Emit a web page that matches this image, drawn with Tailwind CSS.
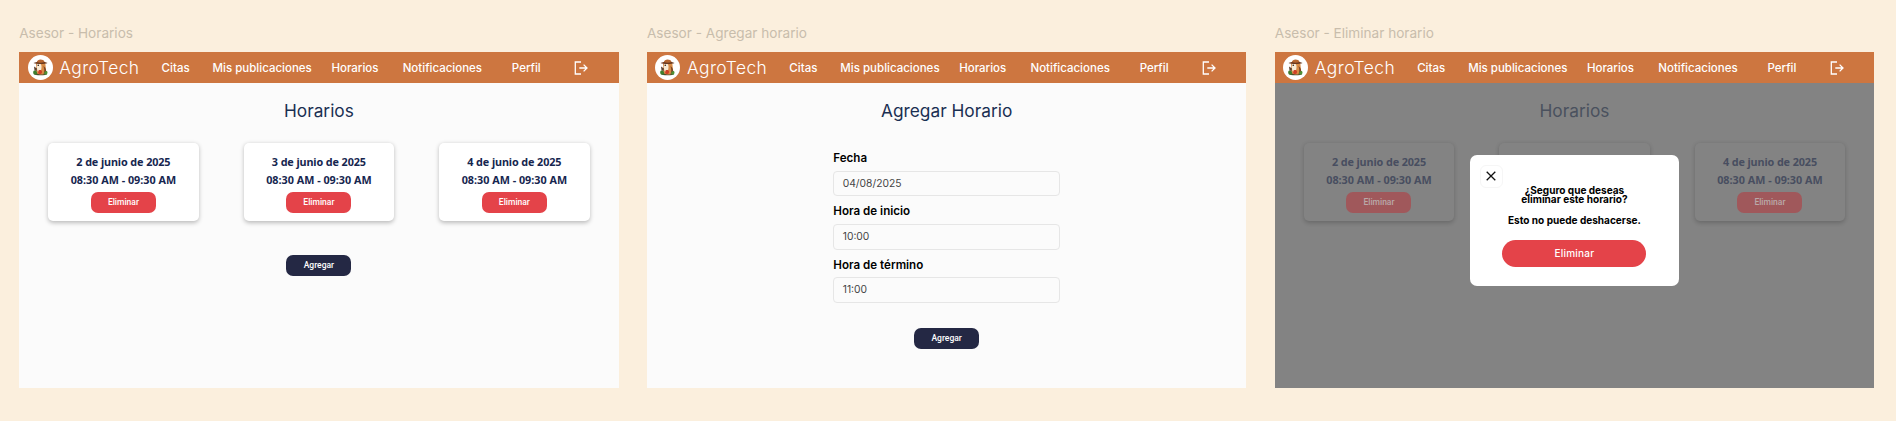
<!DOCTYPE html>
<html lang="es">
<head>
<meta charset="utf-8">
<title>AgroTech - Horarios</title>
<script src="https://cdn.jsdelivr.net/npm/@tailwindcss/browser@4"></script>
</head>
<body class="h-[421px] overflow-hidden bg-[#fbefdd] font-['Inter',sans-serif]">

<svg class="hidden">
  <symbol id="logo" viewBox="0 0 50 50">
    <circle cx="25" cy="25" r="25" fill="#fff"/>
    <ellipse cx="25" cy="38" rx="13" ry="2.5" fill="#4c4a2c"/>
    <path d="M16 19c0-5 4-8 9-8s10 3 10 9c0 5 2 9 1 14-1 4-5 5-10 5s-10-2-10-7c0-5 1-8 0-13z" fill="#d98b45"/>
    <path d="M18 17c5-3 9 1 9 6 0 6-1 10-5 12-4-2-5-9-4-18z" fill="#f7ead5"/>
    <path d="M11 16c6-3 22-4 28 0-5 2.500-22 2.500-28 0z" fill="#6b3a20"/>
    <path d="M18 14c0-6 13-7 15 0-4 2-11 2-15 0z" fill="#b5652f"/>
    <circle cx="20.500" cy="20.500" r="1.6" fill="#2a1a12"/>
    <path d="M12 23l6 4-1 5-4-1z" fill="#5b4130"/>
    <path d="M31 22c5 3 6 9 5 15l-5 1c2-5 2-9 0-16z" fill="#7a4526"/>
    <path d="M11 32c3-2 7 0 7 3v4h-6c-2-2-2-5-1-7z" fill="#3f7d2d"/>
    <path d="M34 33c3-2 5-1 5 2l-1 4h-5c-1-3-1-4 1-6z" fill="#4f8f33"/>
    <path d="M21 31c3-2 7-1 7 3s-3 4-5 4-4-3-2-7z" fill="#cf3f26"/>
  </symbol>
  <symbol id="exit" viewBox="0 0 14 14">
    <path d="M7 1H1.300v12H7M5.300 7h7.200M9.600 3.600 13 7 9.600 10.400" fill="none" stroke="#fff" stroke-width="1.3"/>
  </symbol>
</svg>

<main class="flex gap-[28.4px] pt-[23px] pl-[19.2px]">

  <section class="w-[599.4px] shrink-0">
    <h2 class="h-5 text-[13.6px] leading-[21px] whitespace-nowrap text-[#c8bdac]">Asesor - Horarios</h2>
    <div class="mt-[8.5px] h-[336.8px] bg-[#fbfbfb]">
      <nav class="flex h-[31.6px] items-center bg-[#cd7640] pt-px pl-[8.4px] text-[11.5px] leading-5 font-medium whitespace-nowrap text-white">
        <div class="flex w-[134px] items-center">
          <svg class="size-[25px]"><use href="#logo"/></svg>
          <span class="ml-[6.6px] text-[17.4px] font-light tracking-[0.45px]">AgroTech</span>
        </div>
        <a class="w-[51px]">Citas</a>
        <a class="w-[118.8px]">Mis publicaciones</a>
        <a class="w-[71.3px]">Horarios</a>
        <a class="w-[109.2px]">Notificaciones</a>
        <a class="w-[62.3px]">Perfil</a>
        <svg class="size-3.5"><use href="#exit"/></svg>
      </nav>
      <div class="flex flex-col items-center pt-[17.6px]">
        <h1 class="text-[17.3px] leading-5 text-[#1a2f52]">Horarios</h1>
        <div class="mt-[22px] flex gap-[45.2px] text-center font-['Noto_Sans',sans-serif] text-[10.8px] leading-[18px] font-bold text-[#16264f]">
          <article class="flex h-[78.3px] w-[150.3px] flex-col items-center rounded-[5px] bg-white pt-[10px] shadow-[0_1.5px_4px_rgba(0,0,0,0.25)]">
            <p class="tracking-[-0.1px]">2 de junio de 2025</p>
            <p>08:30 AM - 09:30 AM</p>
            <button class="mt-[3.4px] h-[20.5px] w-[65px] rounded-[7px] bg-[#e44349] font-['Roboto',sans-serif] text-[8.5px] leading-[20.5px] font-medium text-white">Eliminar</button>
          </article>
          <article class="flex h-[78.3px] w-[150.3px] flex-col items-center rounded-[5px] bg-white pt-[10px] shadow-[0_1.5px_4px_rgba(0,0,0,0.25)]">
            <p class="tracking-[-0.1px]">3 de junio de 2025</p>
            <p>08:30 AM - 09:30 AM</p>
            <button class="mt-[3.4px] h-[20.5px] w-[65px] rounded-[7px] bg-[#e44349] font-['Roboto',sans-serif] text-[8.5px] leading-[20.5px] font-medium text-white">Eliminar</button>
          </article>
          <article class="flex h-[78.3px] w-[150.3px] flex-col items-center rounded-[5px] bg-white pt-[10px] shadow-[0_1.5px_4px_rgba(0,0,0,0.25)]">
            <p class="tracking-[-0.1px]">4 de junio de 2025</p>
            <p>08:30 AM - 09:30 AM</p>
            <button class="mt-[3.4px] h-[20.5px] w-[65px] rounded-[7px] bg-[#e44349] font-['Roboto',sans-serif] text-[8.5px] leading-[20.5px] font-medium text-white">Eliminar</button>
          </article>
        </div>
        <button class="mt-[34.2px] h-[20.5px] w-[65px] rounded-[7px] bg-[#242844] font-['Roboto',sans-serif] text-[8.5px] leading-[20.5px] font-medium text-white">Agregar</button>
      </div>
    </div>
  </section>

  <section class="w-[599.4px] shrink-0">
    <h2 class="h-5 text-[13.6px] leading-[21px] whitespace-nowrap text-[#c8bdac]">Asesor - Agregar horario</h2>
    <div class="mt-[8.5px] h-[336.8px] bg-[#fbfbfb]">
      <nav class="flex h-[31.6px] items-center bg-[#cd7640] pt-px pl-[8.4px] text-[11.5px] leading-5 font-medium whitespace-nowrap text-white">
        <div class="flex w-[134px] items-center">
          <svg class="size-[25px]"><use href="#logo"/></svg>
          <span class="ml-[6.6px] text-[17.4px] font-light tracking-[0.45px]">AgroTech</span>
        </div>
        <a class="w-[51px]">Citas</a>
        <a class="w-[118.8px]">Mis publicaciones</a>
        <a class="w-[71.3px]">Horarios</a>
        <a class="w-[109.2px]">Notificaciones</a>
        <a class="w-[62.3px]">Perfil</a>
        <svg class="size-3.5"><use href="#exit"/></svg>
      </nav>
      <div class="flex flex-col items-center pt-[17.6px]">
        <h1 class="text-[17.3px] leading-5 text-[#1a2f52]">Agregar Horario</h1>
        <form class="mt-[27.7px] flex w-[226.7px] flex-col gap-[5px] text-[11.6px] leading-5 font-semibold text-black">
          <label>Fecha
            <span class="mt-[2.5px] flex h-[25.6px] items-center rounded-[4px] border border-[#e6e6e6] pb-[2px] pl-[8.4px] text-[10.3px] font-normal text-[#454545]">04/08/2025</span>
          </label>
          <label>Hora de inicio
            <span class="mt-[2.5px] flex h-[25.6px] items-center rounded-[4px] border border-[#e6e6e6] pb-[2px] pl-[8.4px] text-[10.3px] font-normal text-[#454545]">10:00</span>
          </label>
          <label>Hora de término
            <span class="mt-[2.5px] flex h-[25.6px] items-center rounded-[4px] border border-[#e6e6e6] pb-[2px] pl-[8.4px] text-[10.3px] font-normal text-[#454545]">11:00</span>
          </label>
        </form>
        <button class="mt-[25.4px] h-[20.5px] w-[65px] rounded-[7px] bg-[#242844] font-['Roboto',sans-serif] text-[8.5px] leading-[20.5px] font-medium text-white">Agregar</button>
      </div>
    </div>
  </section>

  <section class="w-[599.4px] shrink-0">
    <h2 class="h-5 text-[13.6px] leading-[21px] whitespace-nowrap text-[#c8bdac]">Asesor - Eliminar horario</h2>
    <div class="relative mt-[8.5px] h-[336.8px] bg-[#838383]">
      <nav class="flex h-[31.6px] items-center bg-[#cd7640] pt-px pl-[8.4px] text-[11.5px] leading-5 font-medium whitespace-nowrap text-white">
        <div class="flex w-[134px] items-center">
          <svg class="size-[25px]"><use href="#logo"/></svg>
          <span class="ml-[6.6px] text-[17.4px] font-light tracking-[0.45px]">AgroTech</span>
        </div>
        <a class="w-[51px]">Citas</a>
        <a class="w-[118.8px]">Mis publicaciones</a>
        <a class="w-[71.3px]">Horarios</a>
        <a class="w-[109.2px]">Notificaciones</a>
        <a class="w-[62.3px]">Perfil</a>
        <svg class="size-3.5"><use href="#exit"/></svg>
      </nav>
      <div class="flex flex-col items-center pt-[17.6px]">
        <h1 class="text-[17.3px] leading-5 text-[#4a515e]">Horarios</h1>
        <div class="mt-[22px] flex gap-[45.2px] text-center font-['Noto_Sans',sans-serif] text-[10.8px] leading-[18px] font-bold text-[#484e60]">
          <article class="flex h-[78.3px] w-[150.3px] flex-col items-center rounded-[5px] bg-[#838383] pt-[10px] shadow-[0_1.5px_4px_rgba(0,0,0,0.2)]">
            <p class="tracking-[-0.1px]">2 de junio de 2025</p>
            <p>08:30 AM - 09:30 AM</p>
            <button class="mt-[3.4px] h-[20.5px] w-[65px] rounded-[7px] bg-[#a0585b] font-['Roboto',sans-serif] text-[8.5px] leading-[20.5px] font-medium text-[#b9a9a9]">Eliminar</button>
          </article>
          <article class="flex h-[78.3px] w-[150.3px] flex-col items-center rounded-[5px] bg-[#838383] pt-[10px] shadow-[0_1.5px_4px_rgba(0,0,0,0.2)]">
            <p class="tracking-[-0.1px]">3 de junio de 2025</p>
            <p>08:30 AM - 09:30 AM</p>
            <button class="mt-[3.4px] h-[20.5px] w-[65px] rounded-[7px] bg-[#a0585b] font-['Roboto',sans-serif] text-[8.5px] leading-[20.5px] font-medium text-[#b9a9a9]">Eliminar</button>
          </article>
          <article class="flex h-[78.3px] w-[150.3px] flex-col items-center rounded-[5px] bg-[#838383] pt-[10px] shadow-[0_1.5px_4px_rgba(0,0,0,0.2)]">
            <p class="tracking-[-0.1px]">4 de junio de 2025</p>
            <p>08:30 AM - 09:30 AM</p>
            <button class="mt-[3.4px] h-[20.5px] w-[65px] rounded-[7px] bg-[#a0585b] font-['Roboto',sans-serif] text-[8.5px] leading-[20.5px] font-medium text-[#b9a9a9]">Eliminar</button>
          </article>
        </div>
      </div>
      <div role="dialog" class="absolute top-[103.5px] left-[195.4px] flex h-[130.6px] w-[208.6px] flex-col items-center rounded-[7px] bg-white pt-[31px] text-center text-[10.05px] leading-[9px] font-bold whitespace-nowrap text-black">
        <button class="absolute top-[10px] left-[10px] flex size-[22.6px] items-center justify-center rounded-[6px] border border-[#f6f6f6]">
          <svg viewBox="0 0 10 10" class="size-[10px]"><path d="M.7.7l8.600 8.600M9.300.7L.7 9.300" stroke="#111" stroke-width="1.3" fill="none"/></svg>
        </button>
        <p>¿Seguro que deseas<br>eliminar este horario?</p>
        <p class="mt-[11.4px] leading-[10px]">Esto no puede deshacerse.</p>
        <button class="mt-[14.6px] h-[27px] w-[144px] rounded-full bg-[#e44349] text-[10px] leading-[27px] font-medium tracking-[0.2px] text-white">Eliminar</button>
      </div>
    </div>
  </section>

</main>
</body>
</html>
